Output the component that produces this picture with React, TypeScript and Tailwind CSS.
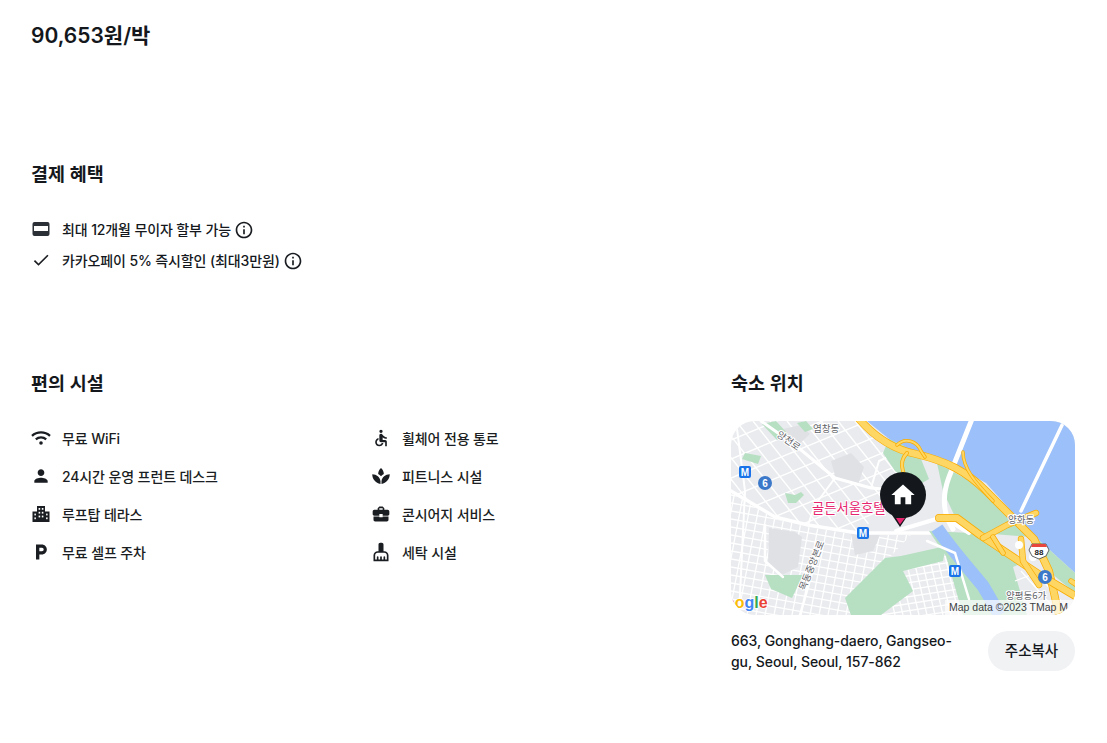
const FONT = "font-['Inter','Noto_Sans_CJK_KR',sans-serif]";

function Icon({ d, size = 20 }: { d: string; size?: number }) {
  return (
    <svg width={size} height={size} viewBox="0 0 24 24" fill="#1a1d21" className="shrink-0">
      <path d={d} />
    </svg>
  );
}

const INFO = "M11 7h2v2h-2zm0 4h2v6h-2zm1-9C6.48 2 2 6.48 2 12s4.48 10 10 10 10-4.48 10-10S17.52 2 12 2zm0 18c-4.41 0-8-3.59-8-8s3.59-8 8-8 8 3.59 8 8-3.59 8-8 8z";
const CHECK = "M9 16.17L4.83 12l-1.42 1.41L9 19 21 7l-1.41-1.41z";
const PERSON = "M12 12c2.21 0 4-1.79 4-4s-1.79-4-4-4-4 1.79-4 4 1.79 4 4 4zm0 2c-2.67 0-8 1.34-8 4v2h16v-2c0-2.66-5.33-4-8-4z";
const PARKING = "M13 3H6v18h4v-6h3c3.31 0 6-2.69 6-6s-2.69-6-6-6zm.2 8H10V7h3.2c1.1 0 2 .9 2 2s-.9 2-2 2z";
const ACCESSIBLE = "M12 2a2 2 0 1 0 0 4 2 2 0 0 0 0-4zM19 13v-2c-1.54.02-3.09-.75-4.07-1.83l-1.29-1.43c-.17-.19-.38-.34-.61-.45-.01 0-.01-.01-.02-.01H13c-.35-.2-.75-.3-1.19-.26C10.76 7.11 10 8.04 10 9.09V15c0 1.1.9 2 2 2h5v5h2v-5.5c0-1.1-.9-2-2-2h-3v-3.45c1.29 1.07 3.25 1.94 5 1.95zm-6.17 5c-.41 1.16-1.52 2-2.83 2-1.66 0-3-1.34-3-3 0-1.31.84-2.41 2-2.83V12.1c-2.28.46-4 2.48-4 4.9 0 2.76 2.24 5 5 5 2.42 0 4.44-1.72 4.9-4h-2.07z";
const SPA = "M12 2.5c2.2 2 3.3 4.4 3.4 7-1.3.7-2.4 1.6-3.4 2.7-1-1.1-2.1-2-3.4-2.7.1-2.6 1.2-5 3.4-7zM1.5 10c5.2 0 9.4 3.6 9.9 8.3v3.4C5.6 20.6 1.5 15.8 1.5 10zM22.5 10c-5.2 0-9.4 3.6-9.9 8.3v3.4c5.8-1.1 9.9-5.9 9.9-11.7z";
const CASE = "M10 16v-1H3.01L3 19c0 1.11.89 2 2 2h14c1.11 0 2-.89 2-2v-4h-7v1h-4zm10-9h-4.01V5l-2-2h-4l-2 2v2H4c-1.1 0-2 .9-2 2v3c0 1.11.89 2 2 2h6v-2h4v2h6c1.1 0 2-.9 2-2V9c0-1.1-.9-2-2-2zm-6 0h-4V5h4v2z";
const BROOM = "M16 11h-1V3c0-1.1-.9-2-2-2h-2c-1.1 0-2 .9-2 2v8H8c-2.76 0-5 2.24-5 5v7h18v-7c0-2.76-2.24-5-5-5zm3 10h-2v-3c0-.55-.45-1-1-1s-1 .45-1 1v3h-2v-3c0-.55-.45-1-1-1s-1 .45-1 1v3H9v-3c0-.55-.45-1-1-1s-1 .45-1 1v3H5v-5c0-1.65 1.35-3 3-3h8c1.65 0 3 1.35 3 3v5z";
const HOME = "M10 20v-6h4v6h5v-8h3L12 3 2 12h3v8z";

function CardIcon() {
  return (
    <svg width="20" height="20" viewBox="0 0 20 20" className="shrink-0">
      <rect x="1.5" y="3" width="17" height="14" rx="2" fill="#2b3036" />
      <rect x="3" y="7" width="14" height="5" fill="#fff" />
    </svg>
  );
}

function WifiIcon() {
  return (
    <svg width="20" height="20" viewBox="0 0 20 20" fill="none" stroke="#1a1d21" strokeWidth="2.3" className="shrink-0">
      <path d="M1 7.8c5-4.5 13-4.5 18 0" />
      <path d="M4.8 11.4c3-2.6 7.4-2.6 10.4 0" />
      <circle cx="10" cy="15" r="1.8" fill="#1a1d21" stroke="none" />
    </svg>
  );
}

function CityIcon() {
  return (
    <svg width="20" height="20" viewBox="0 0 20 20" className="shrink-0">
      <path d="M6 2h8v5.5h4.5V18h-17V7.5H6z" fill="#1a1d21" />
      <g fill="#fff">
        <rect x="7.6" y="4" width="1.6" height="1.8" />
        <rect x="10.8" y="4" width="1.6" height="1.8" />
        <rect x="7.6" y="7.8" width="1.6" height="1.8" />
        <rect x="10.8" y="7.8" width="1.6" height="1.8" />
        <rect x="3.4" y="9.6" width="1.5" height="1.8" />
        <rect x="15.1" y="9.6" width="1.5" height="1.8" />
        <rect x="7.6" y="11.6" width="1.6" height="1.8" />
        <rect x="10.8" y="11.6" width="1.6" height="1.8" />
        <rect x="3.4" y="13.4" width="1.5" height="1.8" />
        <rect x="15.1" y="13.4" width="1.5" height="1.8" />
      </g>
    </svg>
  );
}

function Highway({ d, w = 5 }: { d: string; w?: number }) {
  return (
    <g fill="none" strokeLinecap="round" strokeLinejoin="round">
      <path d={d} stroke="#f9ab00" strokeWidth={w + 1.4} />
      <path d={d} stroke="#fdd663" strokeWidth={w} />
    </g>
  );
}

function Metro({ x, y }: { x: number; y: number }) {
  return (
    <g>
      <rect x={x - 6} y={y - 6} width="12" height="12" rx="2" fill="#1a73e8" />
      <text x={x} y={y + 3.5} textAnchor="middle" fontSize="10" fontWeight="700" fill="#fff" fontFamily="Liberation Sans">M</text>
    </g>
  );
}

function RouteSix({ x, y }: { x: number; y: number }) {
  return (
    <g>
      <circle cx={x} cy={y} r="7" fill="#3b78c9" />
      <text x={x} y={y + 3.5} textAnchor="middle" fontSize="10" fontWeight="700" fill="#fff" fontFamily="Liberation Sans">6</text>
    </g>
  );
}

const steps = (from: number, to: number, by: number) => {
  const out: number[] = [];
  for (let v = from; v <= to; v += by) out.push(v);
  return out;
};

function MapArt() {
  return (
    <svg width="344" height="194" viewBox="0 0 344 194" className="block">
      <defs>
        <clipPath id="north">
          <path d="M0 0H140L176 66L128 112L77 104L44 96L0 70z" />
        </clipPath>
        <clipPath id="south">
          <path d="M0 72L44 98L77 106L127 114H180L160 135L114 177L120 194H0z" />
        </clipPath>
        <clipPath id="east">
          <path d="M150 150L215 135L238 178L232 194H150z" />
        </clipPath>
      </defs>

      <rect width="344" height="194" fill="#e9ebee" />

      {/* north-west streets */}
      <g clipPath="url(#north)" stroke="#fff" strokeWidth="1.4" fill="none">
        {steps(-80, 190, 17).map((v) => (
          <path key={v} d={`M${v} 0L${v + 95} 120`} />
        ))}
        {steps(0, 190, 19).map((v) => (
          <path key={v} d={`M0 ${v}L180 ${v - 75}`} />
        ))}
      </g>

      {/* south-west streets, denser */}
      <g clipPath="url(#south)" stroke="#fff" strokeWidth="1.3" fill="none">
        {steps(-10, 190, 9).map((v) => (
          <path key={v} d={`M${v + 14} 70L${v - 10} 194`} />
        ))}
        {steps(70, 260, 8).map((v) => (
          <path key={v} d={`M0 ${v - 20}L190 ${v + 14}`} />
        ))}
      </g>

      <g clipPath="url(#east)" stroke="#fff" strokeWidth="1.3" fill="none">
        {steps(150, 240, 8).map((v) => (
          <path key={v} d={`M${v} 135L${v + 14} 194`} />
        ))}
        {steps(130, 200, 7).map((v) => (
          <path key={v} d={`M150 ${v + 8}L240 ${v - 6}`} />
        ))}
      </g>

      {/* large grey blocks */}
      <g fill="#dfe1e5">
        <path d="M38 107l26 4 7 5-4 30-16 8-14-10z" />
        <path d="M100 40l20-8 13 14-6 18-22-6z" />
        <path d="M52 8l18 -4 9 9-14 13z" />
        <path d="M120 112h30l-8 18-18 4z" />
      </g>

      {/* parks */}
      <g fill="#b7dfc2">
        <path d="M31 3l14-3 12 13-11 6z" />
        <path d="M14 32l16 3-3 8-16-5z" />
        <path d="M66 2l9-2 7 8-8 3z" />
        <path d="M54 72l10 2 6-3 3 3-8 8-8 0z" />
        <path d="M34 154L72 154L61 177L40 168z" />
        <path d="M114 177L154 137L170 135L215 125L212 140L172 150L182 170L150 194H120z" />
      </g>

      {/* main roads */}
      <g stroke="#fff" fill="none" strokeLinecap="round" strokeLinejoin="round">
        <path d="M30 0L64 24L104 57L140 67L175 70" strokeWidth="3" />
        <path d="M0 70L44 96L77 104L127 112L215 112" strokeWidth="3.5" />
        <path d="M34 104V140L52 156" strokeWidth="2.5" />
        <path d="M89 124L69 194" strokeWidth="2.5" />
        <path d="M5 0L14 70L8 194" strokeWidth="2" />
        <path d="M104 57L84 84L77 104" strokeWidth="2" />
        <path d="M140 67L148 40L170 30" strokeWidth="2" />
      </g>

      {/* river, banks */}
      <path d="M136 0H344V152L300 112L255 62L215 40L190 34L168 26z" fill="#9cc0f9" />
      <path d="M158 18l14 6 18 14 8 20-14 8-20-16-12-18z" fill="#b7dfc2" />
      <path d="M206 42L250 66L300 116L250 112L226 100L212 70z" fill="#b7dfc2" />
      <path d="M198 110L240 112L310 155L335 194H232L215 135z" fill="#b7dfc2" />
      <path d="M300 112L344 152V172L320 152z" fill="#b7dfc2" />
      <path d="M206 107C220 128 240 150 252 165C258 175 264 185 268 194" stroke="#9cc0f9" strokeWidth="13" fill="none" />
      <path d="M282 146L300 138L326 168L330 194H296z" fill="#e9ebee" />
      <path d="M290 150L322 186M300 146L330 180M284 160L310 150" stroke="#fff" strokeWidth="1.3" fill="none" />

      {/* bridges */}
      <g stroke="#fff" fill="none" strokeLinecap="round">
        <path d="M241 -2L218 56C212 72 210 90 222 108" strokeWidth="5" />
        <path d="M333 0L290 90" strokeWidth="3.5" />
        <path d="M165 110L212 96L238 112" strokeWidth="4" />
        <path d="M196 120L224 132L238 178" strokeWidth="2.5" />
      </g>

      {/* expressways */}
      <Highway d="M128 -2C142 14 160 28 185 33C215 40 235 50 255 70L280 95L303 118L318 150L328 194" w={6.5} />
      <Highway d="M208 97L226 97L249 114L309 154L346 176" w={6.5} />
      <Highway d="M252 117L276 104L305 92" w={5} />
      <Highway d="M232 31C232 48 245 62 262 80" w={2} />
      <Highway d="M176 32C166 42 172 58 186 70" w={2.5} />
      <Highway d="M166 24C174 16 186 20 190 30L194 36" w={2} />
      <Highway d="M290 118L292 140L308 164" w={5} />
      <Highway d="M262 116L272 132M340 160L346 164" w={4} />
      <circle cx="288" cy="124" r="4" fill="#fff" />
      <circle cx="302" cy="136" r="4" fill="#fff" />

      {/* route marks */}
      <Metro x={14} y={51} />
      <RouteSix x={34} y={62} />
      <Metro x={132} y={112} />
      <Metro x={224} y={150} />
      <RouteSix x={314} y={156} />
      <path d="M301 123h14l3 6-3 6-7 3-7-3-3-6z" fill="#fff" stroke="#3c4043" strokeWidth="0.8" />
      <path d="M301.5 123h13l1.5 3h-16z" fill="#e8453c" />
      <text x="308" y="134" textAnchor="middle" fontSize="8" fontWeight="700" fill="#202124" fontFamily="Liberation Sans">88</text>

      {/* place names */}
      <g fontFamily="Noto Sans CJK KR" fontSize="9.5" fill="#5f6368" stroke="#fff" strokeWidth="2" paintOrder="stroke">
        <text x="82" y="11">염창동</text>
        <text x="45" y="15" transform="rotate(35 45 15)">양천로</text>
        <text x="277" y="102">양화동</text>
        <text x="275" y="178">양평동6가</text>
        <text x="74" y="170" transform="rotate(-68 74 170)">목동중앙본로</text>
      </g>
      <text x="81" y="92" fontFamily="Noto Sans CJK KR" fontSize="13.3" fill="#e6266f" stroke="#fff" strokeWidth="2" paintOrder="stroke">골든서울호텔</text>

      {/* logo, cut by the map edge */}
      <text x="-6" y="187" fontFamily="Liberation Sans" fontSize="16" fontWeight="700" stroke="#fff" strokeWidth="1.5" paintOrder="stroke">
        <tspan fill="#ea4335">o</tspan>
        <tspan fill="#fbbc04">o</tspan>
        <tspan fill="#4285f4">g</tspan>
        <tspan fill="#34a853">l</tspan>
        <tspan fill="#ea4335">e</tspan>
      </text>
      <rect x="214" y="179" width="130" height="15" fill="#fff" opacity="0.7" />
      <text x="218" y="190" fontFamily="Liberation Sans" fontSize="10.5" fill="#3c4043">Map data ©2023 TMap M</text>

      {/* pin */}
      <path d="M161 94l8 12 8-12z" fill="#14181c" />
      <path d="M165 97l4 6.5 5-6.5z" fill="#e6266f" />
      <circle cx="172" cy="74" r="23" fill="#14181c" />
      <svg x="158" y="60" width="28" height="28" viewBox="0 0 24 24">
        <path d={HOME} fill="#fff" />
      </svg>
    </svg>
  );
}

function Feature({ icon, label }: { icon: React.ReactNode; label: string }) {
  return (
    <div className="flex h-[22px] items-center gap-[11px]">
      {icon}
      <span className="text-[14px] font-medium tracking-[-0.12px] text-[#1a1d21]">{label}</span>
    </div>
  );
}

export default function App() {
  return (
    <div className={`${FONT} h-[743px] w-[1107px] overflow-hidden bg-white px-[31px] text-[#14181c]`}>
      <h1 className="pt-[21px] text-[21px] leading-[30px] font-semibold">90,653원/박</h1>

      <h2 className="mt-[108px] text-[18.5px] leading-[30px] font-semibold">결제 혜택</h2>
      <div className="mt-[29px] flex flex-col gap-[9px]">
        <div className="flex h-[22px] items-center gap-[11px]">
          <CardIcon />
          <span className="text-[14px] font-medium tracking-[-0.12px]">최대 12개월 무이자 할부 가능</span>
          <span className="mt-[1px] -ml-[8px]"><Icon d={INFO} /></span>
        </div>
        <div className="flex h-[22px] items-center gap-[11px]">
          <Icon d={CHECK} />
          <span className="text-[14px] font-medium tracking-[-0.12px]">카카오페이 5% 즉시할인 (최대3만원)</span>
          <span className="mt-[1px] -ml-[8px]"><Icon d={INFO} /></span>
        </div>
      </div>

      <div className="mt-[97px] flex">
        <div className="w-[700px]">
          <h2 className="text-[18.5px] leading-[30px] font-semibold">편의 시설</h2>
          <div className="mt-[29px] grid grid-cols-[340px_340px] gap-y-[16px]">
            <Feature icon={<WifiIcon />} label="무료 WiFi" />
            <Feature icon={<Icon d={ACCESSIBLE} />} label="휠체어 전용 통로" />
            <Feature icon={<Icon d={PERSON} />} label="24시간 운영 프런트 데스크" />
            <Feature icon={<Icon d={SPA} />} label="피트니스 시설" />
            <Feature icon={<CityIcon />} label="루프탑 테라스" />
            <Feature icon={<Icon d={CASE} />} label="콘시어지 서비스" />
            <Feature icon={<Icon d={PARKING} />} label="무료 셀프 주차" />
            <Feature icon={<Icon d={BROOM} />} label="세탁 시설" />
          </div>
        </div>

        <div className="w-[344px]">
          <h2 className="text-[18.5px] leading-[30px] font-semibold">숙소 위치</h2>
          <div className="mt-[23px] overflow-hidden rounded-[24px]">
            <MapArt />
          </div>
          <div className="mt-[15px] flex items-center justify-between">
            <p className="w-[232px] text-[14px] leading-[21px] font-medium tracking-[-0.05px]">
              663, Gonghang-daero, Gangseo-gu, Seoul, Seoul, 157-862
            </p>
            <button className="h-[40px] w-[87px] rounded-full bg-[#f1f2f4] pb-[1px] text-[14.5px] font-medium">주소복사</button>
          </div>
        </div>
      </div>
    </div>
  );
}
